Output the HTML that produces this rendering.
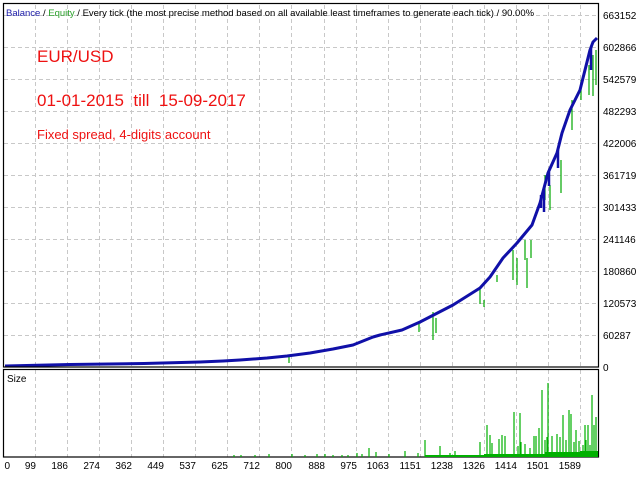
<!DOCTYPE html>
<html><head><meta charset="utf-8"><style>
html,body{margin:0;padding:0;background:#fff;width:640px;height:480px;overflow:hidden}
svg{display:block}
text{font-family:"Liberation Sans",sans-serif}
</style></head><body>
<svg width="640" height="480" xmlns="http://www.w3.org/2000/svg">
<rect width="640" height="480" fill="#fff"/>
<g stroke="#c8c8c8" stroke-width="1" stroke-dasharray="4,3" fill="none">
<path d="M35.5 5V367M67.5 5V367M99.5 5V367M131.5 5V367M163.5 5V367M195.5 5V367M227.5 5V367M259.5 5V367M291.5 5V367M324.5 5V367M356.5 5V367M388.5 5V367M420.5 5V367M452.5 5V367M484.5 5V367M516.5 5V367M548.5 5V367M580.5 5V367"/>
<path d="M35.5 370V457M67.5 370V457M99.5 370V457M131.5 370V457M163.5 370V457M195.5 370V457M227.5 370V457M259.5 370V457M291.5 370V457M324.5 370V457M356.5 370V457M388.5 370V457M420.5 370V457M452.5 370V457M484.5 370V457M516.5 370V457M548.5 370V457M580.5 370V457"/>
<path d="M4 15.5H598M4 47.5H598M4 79.5H598M4 111.5H598M4 143.5H598M4 175.5H598M4 207.5H598M4 239.5H598M4 271.5H598M4 303.5H598M4 335.5H598"/>
</g>
<g stroke="#00a800" stroke-width="1.2" fill="none">
<path d="M289 356V363M419 322V332M433 312V340M436 318V333M480 288V304M484 300V307M497 275V282M513 250V280M517 258V285M525 240V260M527 258V288M531 240V258M545 175V200M550 185V210M561 160V193M572 100V130M581 80V100M589 65V95M593 55V96M596 50V85"/>
</g>
<path d="M5 366L70 364.5L144 363.5L200 362L223 361L240 360L267 358L287 356L310 353L333 349L353 345L373 337L380 335L402 330L420 322L453 305L480 288L490 277L503 258L517 243L532 225L540 203L548 173L557 153L562 133L570 110L580 90L590 50L593 42L597 38" stroke="#1010a8" stroke-width="3" fill="none" stroke-linejoin="round"/>
<path d="M544 190V212M541 195V208M549 172V186M558 150V168M591 48V70" stroke="#1010a8" stroke-width="2.5"/>
<rect x="3.5" y="3.5" width="595" height="363.5" fill="none" stroke="#000" stroke-width="1.2"/>
<rect x="3.5" y="369.5" width="595" height="87.5" fill="none" stroke="#000" stroke-width="1.2"/>
<g fill="#00b000">
<path d="M425 457V455H484V454H545V452H580V451H598V457Z"/>
</g>
<g stroke="#00b000" stroke-width="1.2">
<path d="M234 457V455M241 457V455M255 457V455M269 457V454M292 457V454M305 457V455M317 457V454M325 457V454M333 457V455M342 457V455M348 457V455M357 457V453M362 457V454M369 457V448M376 457V452M389 457V454M405 457V451M418 457V453M425 457V440M440 457V446M450 457V453M455 457V451M480 457V442M487 457V425M490 457V435M492 457V443M499 457V439M502 457V435M505 457V436M514 457V412M518 457V446M520 457V413M521 457V442M525 457V444M530 457V448M534 457V436M536 457V436M539 457V428M542 457V390M545 457V440M547 457V437M548 457V383M552 457V436M557 457V434M560 457V437M563 457V415M566 457V440M569 457V410M571 457V414M574 457V442M576 457V430M579 457V441M583 457V445M585 457V425M586 457V440M588 457V425M590 457V445M592 457V395M594 457V425M596 457V417"/>
</g>
<text x="6" y="16" font-size="9.5"><tspan fill="#1a1aa8">Balance</tspan><tspan fill="#000"> / </tspan><tspan fill="#2aa02a">Equity</tspan><tspan fill="#000"> / Every tick (the most precise method based on all available least timeframes to generate each tick) / 90.00%</tspan></text>
<g fill="#ee1111">
<text x="37" y="62" font-size="17">EUR/USD</text>
<text x="37" y="106" font-size="17" xml:space="preserve">01-01-2015  till  15-09-2017</text>
<text x="37" y="139" font-size="13">Fixed spread, 4-digits account</text>
</g>
<text x="7" y="382" font-size="10" fill="#000">Size</text>
<g font-size="10" fill="#000">
<text x="603" y="19">663152</text><text x="603" y="51">602866</text><text x="603" y="83">542579</text><text x="603" y="115">482293</text><text x="603" y="147">422006</text><text x="603" y="179">361719</text><text x="603" y="211">301433</text><text x="603" y="243">241146</text><text x="603" y="275">180860</text><text x="603" y="307">120573</text><text x="603" y="339">60287</text><text x="603" y="371">0</text>
</g>
<g font-size="10" fill="#000" text-anchor="end">
<text x="10" y="469">0</text><text x="36" y="469">99</text><text x="68" y="469">186</text><text x="100" y="469">274</text><text x="132" y="469">362</text><text x="164" y="469">449</text><text x="196" y="469">537</text><text x="228" y="469">625</text><text x="260" y="469">712</text><text x="292" y="469">800</text><text x="325" y="469">888</text><text x="357" y="469">975</text><text x="389" y="469">1063</text><text x="421" y="469">1151</text><text x="453" y="469">1238</text><text x="485" y="469">1326</text><text x="517" y="469">1414</text><text x="549" y="469">1501</text><text x="581" y="469">1589</text>
</g>
</svg>
</body></html>
